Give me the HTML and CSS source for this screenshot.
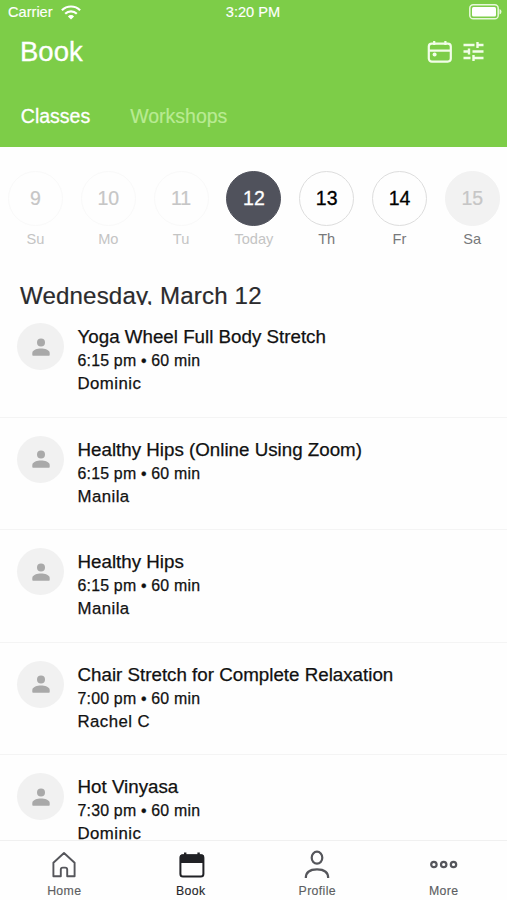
FILE: index.html
```html
<!DOCTYPE html>
<html lang="en">
<head>
<meta charset="utf-8">
<title>Book</title>
<link rel="stylesheet" href="styles.css">
</head>
<body>
<svg class="defs" aria-hidden="true">
  <symbol id="person" viewBox="0 0 18 18"><circle cx="9" cy="4.6" r="4"/><path d="M.3 17v-2c0-3 5.2-4.4 8.7-4.4s8.7 1.4 8.7 4.4v2q0 .7-.7.7H1q-.7 0-.7-.7z"/></symbol>
</svg>
<div class="app">
  <header class="header">
    <div class="status">
      <div class="carrier">Carrier
        <svg width="20" height="15" viewBox="0 0 20 15" fill="none" stroke="#fff" stroke-width="2.2"><path d="M.9 5.2a13 13 0 0 1 18.2 0M4.2 8.7a8.3 8.3 0 0 1 11.6 0"/><path d="M10 14.5L6.9 11.4a4.4 4.4 0 0 1 6.2 0z" fill="#fff" stroke="none"/></svg>
      </div>
      <div class="clock">3:20 PM</div>
      <svg class="battery" width="33" height="16" viewBox="0 0 33 16"><rect x=".8" y=".8" width="28.4" height="14" rx="3.4" fill="none" stroke="#e8f8dc" stroke-width="1.5"/><rect x="3" y="3" width="24" height="9.6" rx="1.5" fill="#fff"/><path d="M30.5 5q2 .8 2 2.8t-2 2.8z" fill="#e8f8dc"/></svg>
    </div>
    <div class="titlebar">
      <h1>Book</h1>
      <div class="actions">
        <svg width="26" height="24" viewBox="0 0 26 24" fill="none" stroke="#f2fde8" stroke-width="2.2"><rect x="1.8" y="3.6" width="22" height="18" rx="3"/><path d="M1.8 10.6h22M7.2 1v4M18.4 1v4" /><circle cx="7.6" cy="14.6" r="2" fill="#f2fde8" stroke="none"/></svg>
        <svg width="21" height="21" viewBox="0 0 21 21" fill="none" stroke="#f2fde8" stroke-width="2.4"><path d="M.5 4h11M14.5 4h6M14.5 1v6M.5 10.5H6M6 7.5v6M9.5 10.500h11M.5 17h7M10.500 17h10M10.500 14v6"/></svg>
      </div>
    </div>
    <nav class="tabs"><span>Classes</span><span class="dim">Workshops</span></nav>
  </header>
  <section class="days">
    <div class="day past"><b>9</b><span>Su</span></div>
    <div class="day past"><b>10</b><span>Mo</span></div>
    <div class="day past"><b>11</b><span>Tu</span></div>
    <div class="day today"><b>12</b><span>Today</span></div>
    <div class="day"><b>13</b><span>Th</span></div>
    <div class="day"><b>14</b><span>Fr</span></div>
    <div class="day off"><b>15</b><span>Sa</span></div>
  </section>
  <h2>Wednesday, March 12</h2>
  <main class="list">
    <article class="row"><div class="avatar"><svg><use href="#person"/></svg></div><div><h3>Yoga Wheel Full Body Stretch</h3><p class="time">6:15 pm • 60 min</p><p class="name">Dominic</p></div></article>
    <article class="row"><div class="avatar"><svg><use href="#person"/></svg></div><div><h3>Healthy Hips (Online Using Zoom)</h3><p class="time">6:15 pm • 60 min</p><p class="name">Manila</p></div></article>
    <article class="row"><div class="avatar"><svg><use href="#person"/></svg></div><div><h3>Healthy Hips</h3><p class="time">6:15 pm • 60 min</p><p class="name">Manila</p></div></article>
    <article class="row"><div class="avatar"><svg><use href="#person"/></svg></div><div><h3>Chair Stretch for Complete Relaxation</h3><p class="time">7:00 pm • 60 min</p><p class="name">Rachel C</p></div></article>
    <article class="row"><div class="avatar"><svg><use href="#person"/></svg></div><div><h3>Hot Vinyasa</h3><p class="time">7:30 pm • 60 min</p><p class="name">Dominic</p></div></article>
  </main>
  <nav class="bottom">
    <div class="item"><svg width="30" height="30" viewBox="0 0 30 30" fill="none" stroke="#55565b" stroke-width="1.9" stroke-linejoin="round"><path d="M4.4 12.8L15 3l10.600 9.800V26.200H18.200V19.600q0-2-2-2h-2.400q-2 0-2 2v6.600H4.400z"/></svg><span>Home</span></div>
    <div class="item active"><svg width="30" height="30" viewBox="0 0 30 30"><rect x="4.400" y="5.200" width="23" height="21.400" rx="2.600" fill="none" stroke="#202125" stroke-width="2"/><path d="M4 13V6.500q0-2 2-2h20q2 0 2 2V13zM8 2.400h2.400v4H8zM21.400 2.400h2.400v4h-2.400z" fill="#202125"/></svg><span>Book</span></div>
    <div class="item"><svg width="30" height="30" viewBox="0 0 30 30" fill="none" stroke="#55565b" stroke-width="2.200"><ellipse cx="15" cy="7.700" rx="5.300" ry="6"/><path d="M3.800 28c0-6 4.400-8.700 11.200-8.700S26.200 22 26.200 28"/></svg><span>Profile</span></div>
    <div class="item"><svg width="30" height="30" viewBox="0 0 30 30" fill="none" stroke="#55565b" stroke-width="2.200"><circle cx="4.900" cy="14.500" r="2.700"/><circle cx="14.700" cy="14.500" r="2.700"/><circle cx="24.500" cy="14.500" r="2.700"/></svg><span>More</span></div>
  </nav>
</div>
</body>
</html>
```
FILE: styles.css
```css
* { box-sizing: border-box; margin: 0; padding: 0; }
body { background: #fefefe; font-family: "Liberation Sans", Arial, sans-serif; color: #111; }
h1, h2, h3, b { font-weight: 400; }
svg { display: block; flex: none; }
.defs { width: 0; height: 0; position: absolute; }
.app { width: 507px; height: 900px; display: flex; flex-direction: column; overflow: hidden; }

.header { height: 147px; flex: none; background: #7dcd48; color: #fff; }
.status { height: 24px; display: grid; grid-template-columns: 1fr auto 1fr; align-items: center; padding: 0 5px 0 8px; font-size: 14.600px; -webkit-text-stroke: .15px; }
.carrier { display: flex; align-items: center; gap: 8px; }
.clock { margin-left: -4px; }
.battery { justify-self: end; }
.titlebar { height: 55px; display: flex; justify-content: space-between; align-items: center; padding: 0 23px 0 20px; }
h1 { font-size: 27.500px; padding-top: 1px; -webkit-text-stroke: .3px; }
.actions { display: flex; align-items: center; gap: 10px; }
.tabs { display: flex; gap: 40px; padding: 25px 0 0 20.800px; font-size: 19.500px; line-height: 24px; -webkit-text-stroke: .3px; }
.tabs .dim { color: #b9eb93; -webkit-text-stroke: .2px; }

.days { display: flex; flex: none; height: 133px; padding: 23.500px 0 0 8px; gap: 17.800px; }
.day { width: 55px; flex: none; display: flex; flex-direction: column; align-items: center; gap: 3px; }
.day b { width: 55px; height: 55px; border: 1px solid #ddd; border-radius: 50%; display: flex; align-items: center; justify-content: center; font-size: 19.500px; color: #000; -webkit-text-stroke: .3px; }
.day span { font-size: 14.600px; line-height: 20px; color: #77787a; }
.past b { border-color: #f9f9f9; color: #c6c6c6; -webkit-text-stroke: .2px; }
.past span, .today span { color: #c4c4c4; }
.today b { background: #50525c; border-color: #50525c; color: #fff; }
.off b { background: #f2f2f2; border-color: #f2f2f2; color: #c6c6c6; -webkit-text-stroke: .2px; }

h2 { height: 25px; flex: none; overflow: hidden; padding-left: 20px; font-size: 24.100px; letter-spacing: .150px; line-height: 32px; color: #2b2b2d; -webkit-text-stroke: .2px; }
.list { flex: 1; min-height: 0; overflow: hidden; }
.row { height: 112.500px; display: flex; gap: 13.500px; padding: 18px 0 0 17px; border-bottom: 1px solid #f4f4f4; }
.avatar { width: 47px; height: 47px; flex: none; border-radius: 50%; background: #f1f1f1; display: flex; align-items: center; justify-content: center; }
.avatar svg { width: 18px; height: 18px; fill: #a9a9a9; }
h3 { font-size: 18.750px; line-height: 24px; padding-top: 2px; }
.time { font-size: 15.900px; line-height: 23px; letter-spacing: .2px; }
.name { font-size: 16.800px; line-height: 23px; letter-spacing: .45px; }
h3, .time, .name { -webkit-text-stroke: .25px; white-space: nowrap; }

.bottom { height: 60px; flex: none; border-top: 1px solid #f0f0f0; background: #fefefe; display: grid; grid-template-columns: repeat(4, 1fr); padding-left: 1px; }
.item { display: flex; flex-direction: column; align-items: center; gap: 4px; padding-top: 9px; font-size: 12.300px; line-height: 14px; letter-spacing: .35px; color: #5d5e62; -webkit-text-stroke: .15px; }
.active { color: #26272b; }
```
